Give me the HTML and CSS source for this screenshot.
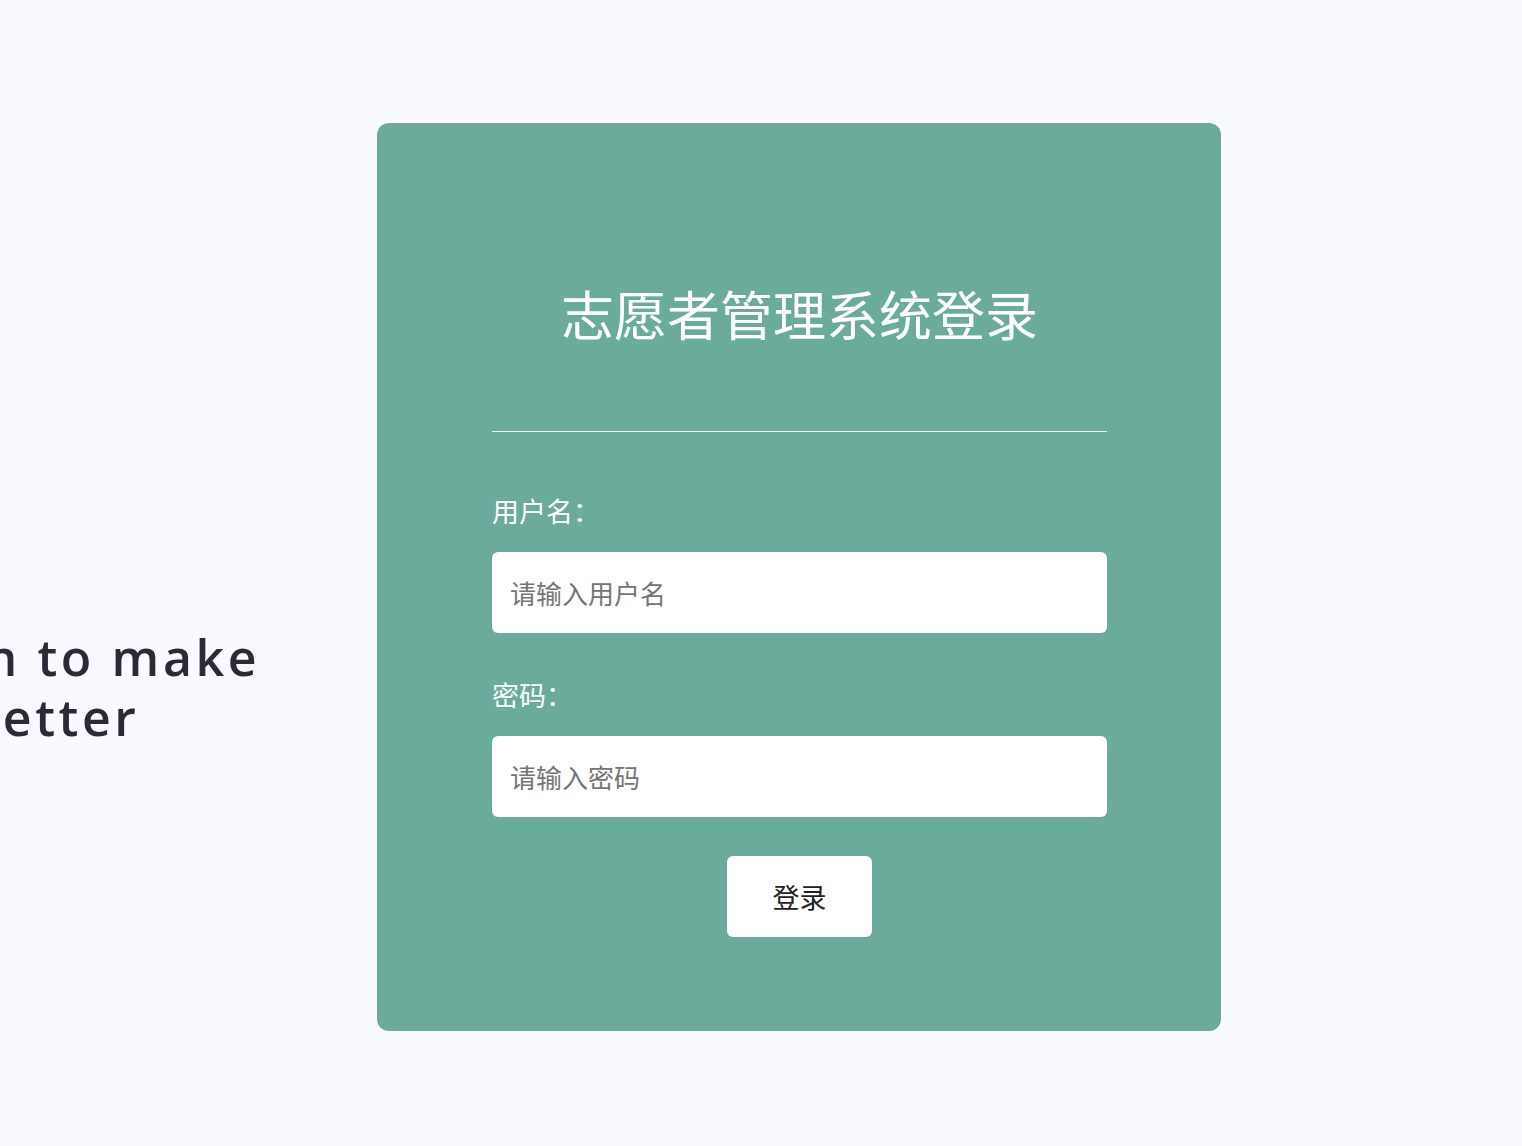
FILE: index.html
```html
<!DOCTYPE html>
<html lang="zh-CN">
<head>
    <meta charset="UTF-8">
    <meta name="viewport" content="width=device-width, initial-scale=1.0">
    <title>志愿者管理系统登录</title>
    <link rel="stylesheet" href="styles.css">
</head>
<body>
    <div class="page">
        <div class="intro">
            <p class="slogan">in to make<br>better</p>
        </div>

        <div class="login-card">
            <h1>志愿者管理系统登录</h1>
            <hr class="divider">

            <form class="login-form" onsubmit="return false;">
                <label for="username">用户名：</label>
                <input type="text" id="username" placeholder="请输入用户名">

                <label for="password">密码：</label>
                <input type="password" id="password" placeholder="请输入密码">

                <button type="submit" class="login-button">登录</button>
            </form>
        </div>
    </div>
</body>
</html>
```

FILE: styles.css
```css
* {
    box-sizing: border-box;
    margin: 0;
    padding: 0;
}

body {
    font-family: "Microsoft YaHei", "Noto Sans CJK SC", sans-serif;
    background: #f8faff;
    color: #333;
    min-height: 100vh;
    overflow: hidden;
}

.page {
    display: flex;
    align-items: flex-start;
    padding-top: 123px;
}

.intro {
    width: 377px;
    flex-shrink: 0;
    overflow: hidden;
    padding-top: 504px;
}

.slogan {
    margin-left: -32px;
    font-family: "Open Sans", sans-serif;
    font-size: 50px;
    font-weight: 600;
    line-height: 60px;
    letter-spacing: 3.6px;
    color: #2b2b38;
    white-space: nowrap;
    filter: blur(0.6px);
}

.login-card {
    width: 844px;
    height: 908px;
    background: #6aab9c;
    border-radius: 12px;
    padding: 151px 114px 0 115px;
}

.login-card h1 {
    color: #fff;
    font-weight: normal;
    font-size: 53px;
    line-height: 78px;
    text-align: center;
}

.divider {
    border: none;
    height: 1px;
    background: rgba(255, 255, 255, 0.85);
    margin-top: 79px;
}

.login-form {
    display: flex;
    flex-direction: column;
    padding-top: 61px;
}

.login-form label {
    color: #fff;
    font-size: 27px;
    line-height: 36px;
    margin-bottom: 23px;
}

.login-form input {
    height: 81px;
    border: none;
    border-radius: 6px;
    background: #fff;
    padding: 0 18px;
    font-family: inherit;
    font-size: 26px;
    color: #333;
    outline: none;
    margin-bottom: 44px;
}

.login-form input::placeholder {
    color: #757575;
}

.login-form input:last-of-type {
    margin-bottom: 39px;
}

.login-button {
    align-self: center;
    width: 145px;
    height: 81px;
    border: none;
    border-radius: 6px;
    background: #fff;
    color: #222;
    font-family: inherit;
    font-size: 27px;
    cursor: pointer;
}
```
